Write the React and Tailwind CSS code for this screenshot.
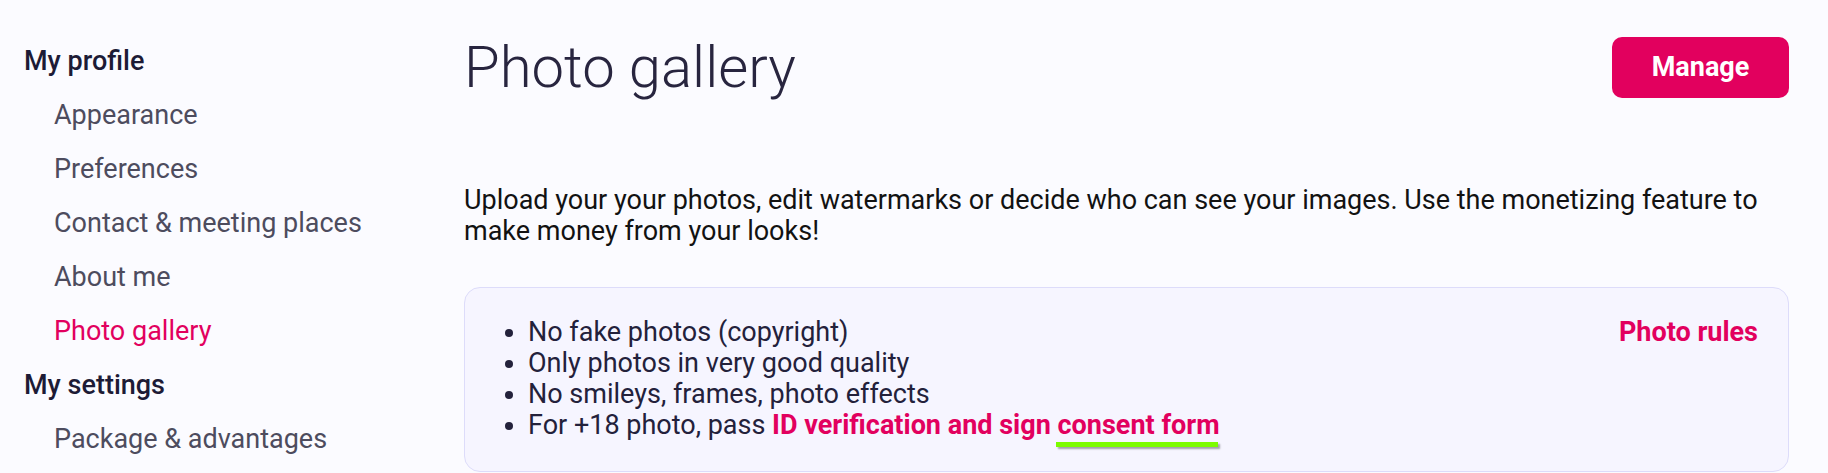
import React from 'react';

const menu = [
  {
    title: 'My profile',
    items: [
      { label: 'Appearance' },
      { label: 'Preferences' },
      { label: 'Contact & meeting places' },
      { label: 'About me' },
      { label: 'Photo gallery', active: true },
    ],
  },
  {
    title: 'My settings',
    items: [{ label: 'Package & advantages' }],
  },
];

const rules = [
  'No fake photos (copyright)',
  'Only photos in very good quality',
  'No smileys, frames, photo effects',
];

const Sidebar = () => (
  <aside className="w-[464px] shrink-0 pt-[34px] pl-[24px]">
    {menu.map((group) => (
      <div key={group.title}>
        <div className="leading-[54px] text-[27px] font-medium text-[#1d1b36]">{group.title}</div>
        {group.items.map((it) => (
          <a
            key={it.label}
            href="#"
            className={
              'block pl-[30px] leading-[54px] text-[27px] ' +
              (it.active ? 'text-[#e2005e]' : 'text-[#4d4c5e]')
            }
          >
            {it.label}
          </a>
        ))}
      </div>
    ))}
  </aside>
);

export default function App() {
  return (
    <div
      className="flex h-[473px] overflow-hidden bg-[#fbfbff]"
      style={{ fontFamily: 'Roboto, "Noto Sans", sans-serif' }}
    >
      <Sidebar />

      <main className="flex-1 pt-[33px] pr-[39px]">
        {/* Header */}
        <div className="flex items-center justify-between">
          <h1 className="text-[58px] leading-[68px] font-light text-[#28253f]">Photo gallery</h1>
          <button className="h-[61px] w-[177px] rounded-[10px] bg-[#e2005e] text-[27px] leading-[31px] font-bold text-white">
            Manage
          </button>
        </div>

        <p className="mt-[84px] text-[27px] leading-[31px] text-[#121212]">
          Upload your your photos, edit watermarks or decide who can see your images. Use the monetizing
          feature to make money from your looks!
        </p>

        {/* Rules box */}
        <div className="mt-[40px] flex justify-between rounded-[16px] border border-[#dddcfa] bg-[#f6f5ff] px-[30px] pt-[29px] pb-[30px] text-[27px] leading-[31px]">
          <ul className="list-disc pl-[33px] text-[#23213b]">
            {rules.map((r) => (
              <li key={r}>{r}</li>
            ))}
            <li>
              For +18 photo, pass{' '}
              <span className="font-bold text-[#e2005e]">
                ID verification and sign{' '}
                <span className="relative">
                  consent form
                  <span className="absolute left-[-2px] right-[2px] top-[100%] mt-[1px] h-[5px] bg-[#7cfc00] shadow-[2px_2px_2px_rgba(0,0,0,0.35)]" />
                </span>
              </span>
            </li>
          </ul>
          <a href="#" className="font-bold text-[#e2005e]">
            Photo rules
          </a>
        </div>
      </main>
    </div>
  );
}
